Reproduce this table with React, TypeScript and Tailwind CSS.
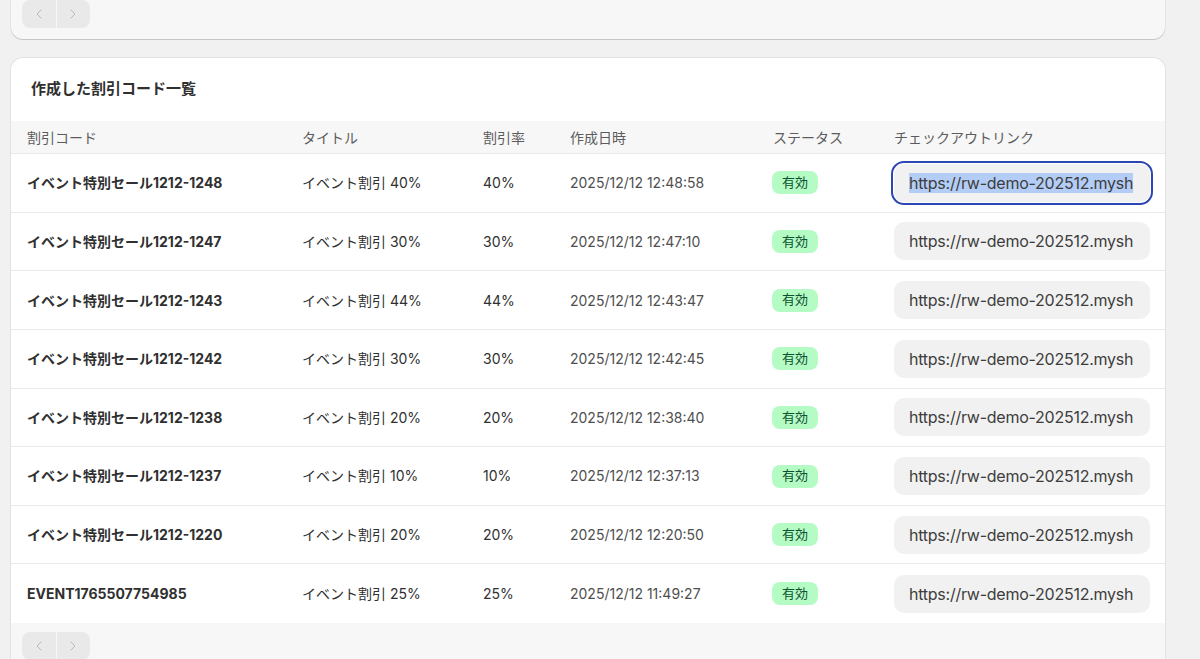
import { ChevronLeft, ChevronRight } from "lucide-react";

const rows = [
  { code: "イベント特別セール1212-1248", title: "イベント割引 40%", rate: "40%", date: "2025/12/12 12:48:58" },
  { code: "イベント特別セール1212-1247", title: "イベント割引 30%", rate: "30%", date: "2025/12/12 12:47:10" },
  { code: "イベント特別セール1212-1243", title: "イベント割引 44%", rate: "44%", date: "2025/12/12 12:43:47" },
  { code: "イベント特別セール1212-1242", title: "イベント割引 30%", rate: "30%", date: "2025/12/12 12:42:45" },
  { code: "イベント特別セール1212-1238", title: "イベント割引 20%", rate: "20%", date: "2025/12/12 12:38:40" },
  { code: "イベント特別セール1212-1237", title: "イベント割引 10%", rate: "10%", date: "2025/12/12 12:37:13" },
  { code: "イベント特別セール1212-1220", title: "イベント割引 20%", rate: "20%", date: "2025/12/12 12:20:50" },
  { code: "EVENT1765507754985", title: "イベント割引 25%", rate: "25%", date: "2025/12/12 11:49:27" },
];

const link = "https://rw-demo-202512.mysh";

const cols = "grid grid-cols-[275px_181px_87px_203px_121px_1fr]";

const Pager = () => (
  <div className="flex w-[68px] h-[28px] rounded-lg overflow-hidden">
    <div className="flex-1 bg-[#e9e9e9] flex items-center justify-center text-[#b8b8b8]">
      <ChevronLeft size={16} strokeWidth={1.5} />
    </div>
    <div className="w-px bg-[#f7f7f7]" />
    <div className="flex-1 bg-[#e9e9e9] flex items-center justify-center text-[#b8b8b8]">
      <ChevronRight size={16} strokeWidth={1.5} />
    </div>
  </div>
);

export default function App() {
  return (
    <div
      className="min-h-[659px] bg-[#f1f1f1] overflow-hidden text-[#303030]"
      style={{ fontFamily: 'Inter, "Noto Sans CJK JP", sans-serif' }}
    >
      {/* previous card footer */}
      <div className="ml-[11px] w-[1154px] -mt-[9px] bg-[#f7f7f7] rounded-b-xl pt-[9px] pb-[11px] px-[11px] shadow-[0_1px_0_0_rgba(0,0,0,0.13),0_0_0_1px_rgba(0,0,0,0.05)]">
        <Pager />
      </div>

      <div className="ml-[11px] w-[1154px] mt-[19px] bg-white rounded-t-xl overflow-hidden shadow-[0_0_0_1px_rgba(0,0,0,0.06)]">
        <div className="px-5 pt-[21px] pb-[22px]">
          <h2 className="text-[15px] leading-[20px] font-bold">作成した割引コード一覧</h2>
        </div>

        <div className={`${cols} h-[33px] items-center bg-[#f7f7f7] border-b border-[#ebebeb] text-[14px] text-[#5c5c5c]`}>
          <div className="px-4">割引コード</div>
          <div className="px-4">タイトル</div>
          <div className="px-4">割引率</div>
          <div className="px-4">作成日時</div>
          <div className="px-4">ステータス</div>
          <div className="px-4 whitespace-nowrap">チェックアウトリンク</div>
        </div>

        {rows.map((r, i) => (
          <div
            key={r.code}
            className={`${cols} h-[58.625px] items-center text-[14px] ${i < rows.length - 1 ? "border-b border-[#ebebeb]" : ""}`}
          >
            <div className="px-4 font-bold whitespace-nowrap">{r.code}</div>
            <div className="px-4 whitespace-nowrap">{r.title}</div>
            <div className="px-4">{r.rate}</div>
            <div className="px-4 text-[#4f4f4f] whitespace-nowrap">{r.date}</div>
            <div className="px-[15px]">
              <span className="inline-flex items-center h-[23px] px-[10px] rounded-lg bg-[#b4fbc4] text-[#0c5132] text-[13px]">
                有効
              </span>
            </div>
            <div className="px-4">
              <div
                className={`w-[256px] h-[38px] rounded-[10px] bg-[#f1f1f1] px-[15px] flex items-center ${
                  i === 0 ? "outline-2 outline-offset-1 outline-[#2c46b4]" : ""
                }`}
              >
                <div className="w-full whitespace-nowrap text-[16px] tracking-[-0.25px] text-[#3d3d3d] leading-[24px]">
                  {i === 0 ? <span className="bg-[#b3cdf6]">{link}</span> : link}
                </div>
              </div>
            </div>
          </div>
        ))}

        <div className="bg-[#f7f7f7] pt-[9px] pb-[11px] px-[11px]">
          <Pager />
        </div>
      </div>
    </div>
  );
}
